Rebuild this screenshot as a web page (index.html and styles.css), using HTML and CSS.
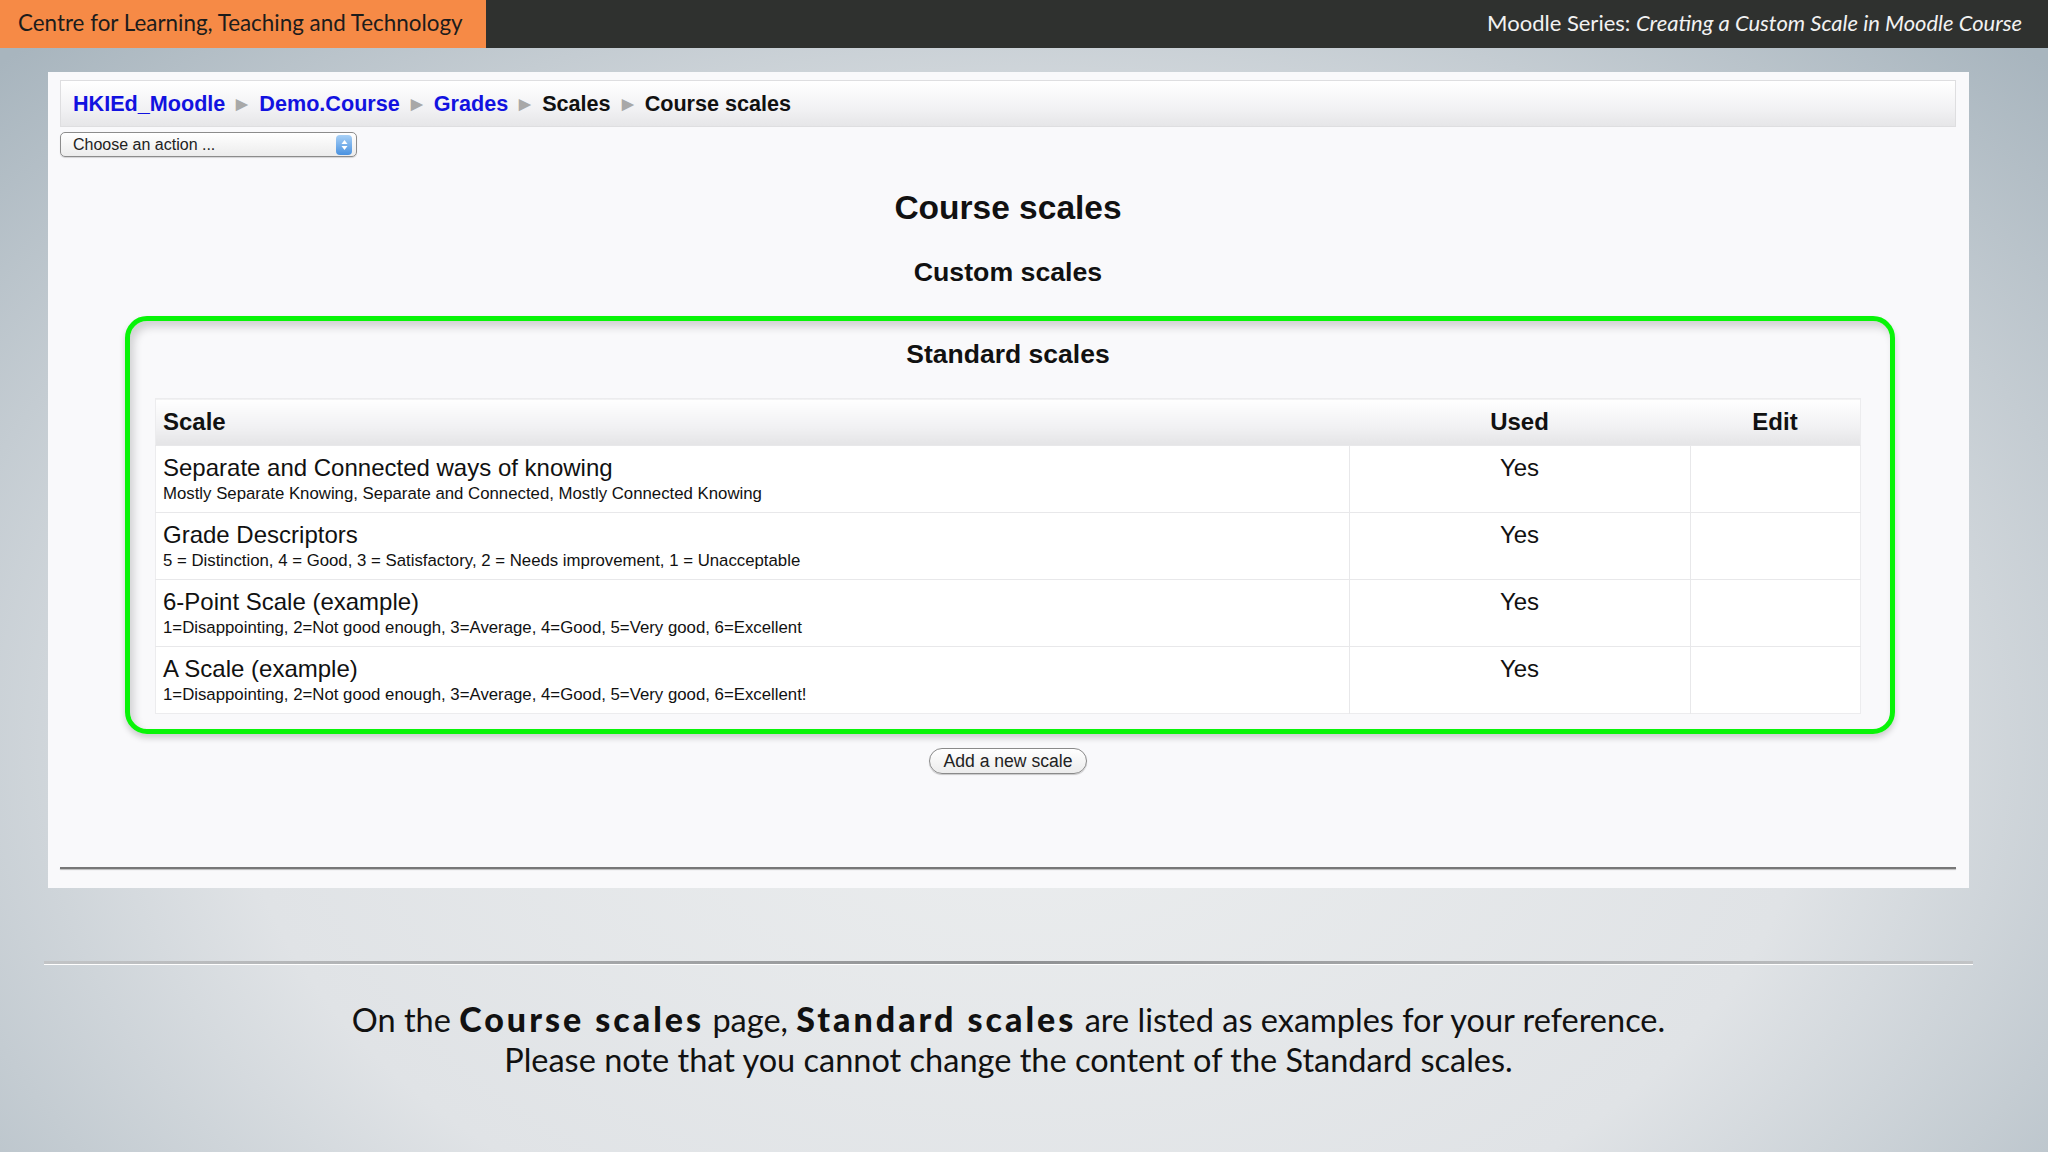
FILE: index.html
```html
<!DOCTYPE html>
<html lang="en">
<head>
<meta charset="UTF-8">
<title>Course scales</title>
<link rel="stylesheet" href="styles.css">
</head>
<body>

<div class="topbar">
    <div class="brand">Centre for Learning, Teaching and Technology</div>
    <div class="series">Moodle Series: <em>Creating a Custom Scale in Moodle Course</em></div>
</div>

<div class="stage">
    <div class="card">
        <div class="crumbs">
            <a href="#">HKIEd_Moodle</a><span class="sep">&#9654;</span>
            <a href="#">Demo.Course</a><span class="sep">&#9654;</span>
            <a href="#">Grades</a><span class="sep">&#9654;</span>
            <span class="here">Scales</span><span class="sep">&#9654;</span>
            <span class="here">Course scales</span>
        </div>

        <div class="action-select">
            <span>Choose an action ...</span>
            <span class="spin">
                <svg width="9" height="14" viewBox="0 0 9 14"><path d="M4.5 2 L7.5 6 L1.5 6 Z M4.5 12 L1.5 8 L7.5 8 Z" fill="#fff"/></svg>
            </span>
        </div>

        <h2 class="page-title">Course scales</h2>
        <h3 class="section-title">Custom scales</h3>

        <div class="highlight">
            <h3 class="section-title inner">Standard scales</h3>
            <table class="scales">
                <thead>
                    <tr><th class="c-scale">Scale</th><th class="c-used">Used</th><th class="c-edit">Edit</th></tr>
                </thead>
                <tbody>
                    <tr>
                        <td class="c-scale"><div class="name">Separate and Connected ways of knowing</div><div class="desc">Mostly Separate Knowing, Separate and Connected, Mostly Connected Knowing</div></td>
                        <td class="c-used">Yes</td><td class="c-edit"></td>
                    </tr>
                    <tr>
                        <td class="c-scale"><div class="name">Grade Descriptors</div><div class="desc">5 = Distinction, 4 = Good, 3 = Satisfactory, 2 = Needs improvement, 1 = Unacceptable</div></td>
                        <td class="c-used">Yes</td><td class="c-edit"></td>
                    </tr>
                    <tr>
                        <td class="c-scale"><div class="name">6-Point Scale (example)</div><div class="desc">1=Disappointing, 2=Not good enough, 3=Average, 4=Good, 5=Very good, 6=Excellent</div></td>
                        <td class="c-used">Yes</td><td class="c-edit"></td>
                    </tr>
                    <tr>
                        <td class="c-scale"><div class="name">A Scale (example)</div><div class="desc">1=Disappointing, 2=Not good enough, 3=Average, 4=Good, 5=Very good, 6=Excellent!</div></td>
                        <td class="c-used">Yes</td><td class="c-edit"></td>
                    </tr>
                </tbody>
            </table>
        </div>

        <div class="btn-row"><button class="add-btn">Add a new scale</button></div>
        <div class="card-rule"></div>
    </div>

    <div class="slide-rule"></div>

    <p class="caption">On the <b>Course scales</b> page, <b>Standard scales</b> are listed as examples for your reference.<br>
    Please note that you cannot change the content of the Standard scales.</p>
</div>

</body>
</html>
```

FILE: styles.css
```css
body {
    margin: 0;
    min-height: 1152px;
    font-family: "Liberation Sans", Arial, sans-serif;
    color: #111;
    background: radial-gradient(ellipse 70% 85% at 50% 65%, #eceeef 0%, #e0e3e6 55%, #a8b5be 100%);
    overflow: hidden;
}

.topbar {
    display: flex;
    justify-content: space-between;
    align-items: center;
    height: 48px;
    background: #2f312f;
    font-family: Lato, "Open Sans", sans-serif;
    font-size: 22.4px;
}
.brand {
    width: 486px;
    height: 100%;
    box-sizing: border-box;
    padding: 0 0 3px 18px;
    display: flex;
    align-items: center;
    background: #f68a46;
    color: #1c1c1c;
}
.series { color: #f2f2f2; padding: 0 26px 3px 0; font-size: 22px; }
.series em { font-style: italic; }

.stage { padding: 24px 79px 0 48px; }

.card {
    background: #f9f9fb;
    padding: 8px 13px 19px 12px;
}

.crumbs {
    height: 45px;
    display: flex;
    align-items: center;
    padding-left: 12px;
    border: 1px solid #dedee0;
    background: linear-gradient(#ffffff, #f2f2f4 60%, #e6e6e8);
    font-size: 21.6px;
    font-weight: bold;
}
.crumbs a { color: #1212e0; text-decoration: none; }
.crumbs .here { color: #111; }
.crumbs .sep { color: #a8a8a8; font-size: 15px; margin: 0 11px; }

.action-select {
    margin-top: 5px;
    width: 297px;
    height: 25px;
    box-sizing: border-box;
    border: 1px solid #8c8c8c;
    border-radius: 5px;
    background: linear-gradient(#ffffff, #ececec);
    display: flex;
    align-items: center;
    justify-content: space-between;
    padding-left: 12px;
    font-size: 16px;
    color: #222;
    box-shadow: 0 1px 1px rgba(0,0,0,0.15);
}
.spin {
    width: 16px;
    height: 20px;
    margin-right: 4px;
    border-radius: 4px;
    background: linear-gradient(#a8d0f6, #4a92e0);
    display: flex;
    align-items: center;
    justify-content: center;
}

.page-title {
    margin: 31px 0 0;
    text-align: center;
    font-size: 33.5px;
    line-height: 40px;
}
.section-title {
    margin: 27px 0 0;
    text-align: center;
    font-size: 26.7px;
    line-height: 34px;
}
.section-title.inner { margin: 0; font-size: 26.5px; }

.highlight {
    margin: 27px 61px 0 65px;
    border: 5px solid #08f408;
    border-radius: 22px;
    padding: 16px 29px 15px 25px;
    box-shadow: inset 4px 6px 8px rgba(0,0,0,0.16), 0 4px 6px rgba(0,0,0,0.18);
}

.scales {
    margin-top: 27px;
    width: 100%;
    table-layout: fixed;
    border-collapse: collapse;
    background: #fff;
    border: 1px solid #ececee;
}
.scales th {
    height: 46px;
    padding: 0 7px;
    font-size: 24px;
    background: linear-gradient(#ffffff, #f1f1f3 60%, #e4e4e6);
}
.scales th.c-scale { text-align: left; }
.scales td {
    height: 67px;
    box-sizing: border-box;
    vertical-align: top;
    padding: 8px 7px 0;
    border-top: 1px solid #e8e8ea;
}
.scales .c-used { width: 327px; text-align: center; border-left: 1px solid #e8e8ea; }
.scales .c-edit { width: 156px; border-left: 1px solid #e8e8ea; }
.scales th.c-used, .scales th.c-edit { border-left: none; }
.scales td.c-used { font-size: 24px; line-height: 28px; }
.name { font-size: 24px; line-height: 28px; }
.desc { font-size: 16.8px; line-height: 20px; margin-top: 2px; }

.btn-row { display: flex; justify-content: center; margin-top: 14px; }
.add-btn {
    height: 26px;
    padding: 0 13px;
    border: 1px solid #8a8a8a;
    border-radius: 13px;
    background: linear-gradient(#ffffff, #ececec);
    font-family: "Liberation Sans", Arial, sans-serif;
    font-size: 17.6px;
    color: #222;
    box-shadow: 0 1px 1px rgba(0,0,0,0.2);
}

.card-rule {
    margin-top: 93px;
    height: 2px;
    background: #777;
    box-shadow: 0 1px 1px #bbb;
}

.slide-rule {
    margin: 73px -4px 0 -4px;
    height: 3px;
    background: linear-gradient(90deg, #c2c4c6, #8f9193 50%, #c2c4c6);
    border-bottom: 1px solid #fff;
}

.caption {
    margin: 34px 0 0;
    text-align: center;
    font-family: Lato, "Open Sans", sans-serif;
    font-size: 32.5px;
    line-height: 40px;
    color: #111;
}
.caption b { font-weight: 900; font-size: 34px; letter-spacing: 3px; }
```
